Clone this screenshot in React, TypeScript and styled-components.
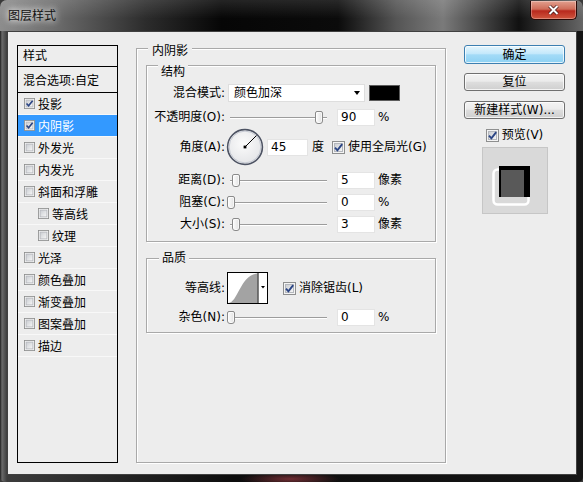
import React from "react";
import styled, { createGlobalStyle } from "styled-components";

const GlobalStyle = createGlobalStyle`
  *, *::before, *::after { box-sizing: border-box; }
  html, body { margin: 0; padding: 0; background: #3a3a3a; }
  body {
    font-family: "DejaVu Sans", "Noto Sans CJK SC", sans-serif;
    font-size: 12px;
    color: #000;
  }
`;

const effects = [
  { name: "投影", checked: true },
  { name: "内阴影", checked: true, selected: true },
  { name: "外发光" },
  { name: "内发光" },
  { name: "斜面和浮雕" },
  { name: "等高线", sub: true },
  { name: "纹理", sub: true },
  { name: "光泽" },
  { name: "颜色叠加" },
  { name: "渐变叠加" },
  { name: "图案叠加" },
  { name: "描边" },
];

const structSliders = [
  { label: "距离(D):", value: "5", unit: "像素", thumb: 2, mt: 5 },
  { label: "阻塞(C):", value: "0", unit: "%", thumb: -3, mt: 4 },
  { label: "大小(S):", value: "3", unit: "像素", thumb: 2, mt: 4 },
];

function CheckBox({ checked, size = 13 }: { checked?: boolean; size?: number }) {
  return (
    <CheckSvg width={size} height={size} viewBox="0 0 13 13">
      <defs>
        <linearGradient id="cbFill" x1="0" y1="0" x2="1" y2="1">
          <stop offset="0" stopColor="#c9ccd1" />
          <stop offset="1" stopColor="#f8f8f8" />
        </linearGradient>
      </defs>
      <rect x="0.5" y="0.5" width="12" height="12" fill="#f4f4f4" stroke="#8e8f8f" />
      <rect x="2.5" y="2.5" width="8" height="8" fill="url(#cbFill)" stroke="#b4b7bd" />
      {checked && (
        <path d="M3 6.6 L5.4 9.3 L10.2 3.2" fill="none" stroke="#2b4585" strokeWidth="1.9" />
      )}
    </CheckSvg>
  );
}

function SliderRow(props: { label: string; value: string; unit: string; thumb: number; mt: number }) {
  return (
    <Row $h={18} $mt={props.mt}>
      <Label>{props.label}</Label>
      <Slider>
        <Thumb style={{ left: props.thumb }} />
      </Slider>
      <NumBox $w={38} $ml={10}>{props.value}</NumBox>
      <Unit $ml={3}>{props.unit}</Unit>
    </Row>
  );
}

export default function App() {
  return (
    <>
      <GlobalStyle />
      <Window>
        <TitleBar>
          <Title>图层样式</Title>
          <CloseButton aria-label="关闭">
            <svg width="11" height="10" viewBox="0 0 11 10">
              <path d="M1.5 1 L9.5 9 M9.5 1 L1.5 9" stroke="#3a1010" strokeWidth="3.4" />
              <path d="M1.5 1 L9.5 9 M9.5 1 L1.5 9" stroke="#fff" strokeWidth="2" />
            </svg>
          </CloseButton>
        </TitleBar>
        <Client>
          <ListPanel>
            <ListHeader>样式</ListHeader>
            <BlendRow>混合选项:自定</BlendRow>
            {effects.map((e) => (
              <EffectItem key={e.name} $indent={e.sub ? 20 : 6} $selected={!!e.selected}>
                <CheckBox checked={e.checked} size={11} />
                <span>{e.name}</span>
              </EffectItem>
            ))}
          </ListPanel>

          <OuterGroup>
            <Caption $top={-5} $left={2} $pad={4}>内阴影</Caption>

            <InnerGroup $h={177} $mt={7}>
              <Caption $top={-1} $left={11} $pad={3}>结构</Caption>
              <Row $h={18} $mt={5}>
                <Label>混合模式:</Label>
                <Select>
                  <span>颜色加深</span>
                  <Caret />
                </Select>
                <Swatch />
              </Row>
              <SliderRow label="不透明度(O):" value="90" unit="%" thumb={85} mt={6} />
              <Row $h={38} $mt={2}>
                <Label>角度(A):</Label>
                <DialSvg width="38" height="38" viewBox="0 0 38 38">
                  <defs>
                    <radialGradient id="dialFill" cx="0.45" cy="0.4" r="0.65">
                      <stop offset="0" stopColor="#fbfbfb" />
                      <stop offset="1" stopColor="#e2e3e6" />
                    </radialGradient>
                  </defs>
                  <circle cx="19" cy="19" r="17.4" fill="url(#dialFill)" stroke="#4d5363" strokeWidth="1.6" />
                  <circle cx="19" cy="19" r="15.9" fill="none" stroke="#c5c9d2" strokeWidth="1" />
                  <line x1="19" y1="19" x2="30.5" y2="7.5" stroke="#000" strokeWidth="1" />
                  <rect x="17.6" y="17.6" width="2.8" height="2.8" fill="#000" />
                </DialSvg>
                <NumBox $w={41} $ml={3}>45</NumBox>
                <Unit $ml={4}>度</Unit>
                <CheckLabel $ml={8}>
                  <CheckBox checked />
                  <span>使用全局光(G)</span>
                </CheckLabel>
              </Row>
              {structSliders.map((s) => (
                <SliderRow key={s.label} {...s} />
              ))}
            </InnerGroup>

            <InnerGroup $h={75} $mt={16}>
              <Caption $top={-8} $left={12} $pad={3}>品质</Caption>
              <Row $h={32} $mt={7}>
                <Label>等高线:</Label>
                <ContourSvg width="41" height="32" viewBox="0 0 41 32">
                  <rect x="0.5" y="0.5" width="40" height="31" fill="#fff" stroke="#000" />
                  <path d="M1 31 C 11 31, 13 3, 30.5 1.5 L30.5 31 Z" fill="#a3a3a3" />
                  <line x1="31" y1="0" x2="31" y2="32" stroke="#000" />
                  <path d="M34 14 L38 14 L36 16.5 Z" fill="#000" />
                </ContourSvg>
                <CheckLabel $ml={15}>
                  <CheckBox checked />
                  <span>消除锯齿(L)</span>
                </CheckLabel>
              </Row>
              <SliderRow label="杂色(N):" value="0" unit="%" thumb={-3} mt={4} />
            </InnerGroup>
          </OuterGroup>

          <Side>
            <Button $primary $h={19} $mt={0}>确定</Button>
            <Button $h={18} $mt={9}>复位</Button>
            <Button $h={18} $mt={10}>新建样式(W)...</Button>
            <PreviewCheck>
              <CheckBox checked />
              <span>预览(V)</span>
            </PreviewCheck>
            <PreviewBox>
              <svg width="64" height="65" viewBox="0 0 64 65">
                <rect x="10.5" y="21.5" width="35" height="35" rx="4" fill="none" stroke="#fff" strokeWidth="2.5" />
                <rect x="16" y="18" width="31" height="31" fill="#000" />
                <rect x="18" y="22" width="23" height="27" fill="#595959" />
              </svg>
            </PreviewBox>
          </Side>
        </Client>
      </Window>
    </>
  );
}

const Window = styled.div`
  width: 583px;
  height: 482px;
  display: flex;
  flex-direction: column;
  border-radius: 7px 7px 5px 5px;
  overflow: hidden;
  background:
    radial-gradient(ellipse 50px 7px at 290px 479px, rgba(190, 70, 80, 0.55), transparent),
    linear-gradient(90deg, #1d1d1d 0px, #6a6a6a 2px, #3c3c3c 7px, #0d0d0d 40%, #151515 100%);
`;

const TitleBar = styled.div`
  height: 31px;
  flex-shrink: 0;
  display: flex;
  justify-content: space-between;
  align-items: flex-start;
  padding-left: 8px;
  background:
    linear-gradient(180deg, rgba(255, 255, 255, 0.12), rgba(255, 255, 255, 0) 60%),
    linear-gradient(90deg, #8d8d8d 0%, #6a6a6a 10%, #2c2c2c 25%, #060606 38%, #0b0b0b 58%,
      #555 68%, #7a7a7a 76%, #2a2a2a 86%, #111 89%, #666 100%);
`;

const Title = styled.div`
  margin-top: 9px;
  line-height: 14px;
  color: #111;
  text-shadow: 0 0 6px #fff, 0 0 10px rgba(255, 255, 255, 0.8);
`;

const CloseButton = styled.div`
  width: 47px;
  height: 19px;
  margin: 1px 6px 0 0;
  border: 1px solid #2a0906;
  border-top: none;
  border-radius: 0 0 5px 5px;
  background: linear-gradient(180deg, #e2a08f 0%, #cf6d59 45%, #b8291d 55%, #d0563e 100%);
  box-shadow: inset 0 0 0 1px rgba(255, 255, 255, 0.3);
  display: flex;
  align-items: center;
  justify-content: center;
`;

const Client = styled.div`
  flex: 1;
  margin: 0 6px 7px 7px;
  border: 1px solid #404040;
  background: #ededed;
  display: flex;
  align-items: flex-start;
  padding: 13px 0 0 9px;
`;

const ListPanel = styled.div`
  width: 101px;
  height: 418px;
  flex-shrink: 0;
  border: 1px solid #000;
  display: flex;
  flex-direction: column;
`;

const ListHeader = styled.div`
  height: 21px;
  line-height: 20px;
  padding-left: 5px;
  border-bottom: 1px solid #000;
`;

const BlendRow = styled.div`
  height: 26px;
  padding: 4px 0 0 5px;
  line-height: 20px;
  border-bottom: 1px solid #000;
  white-space: nowrap;
`;

const EffectItem = styled.div<{ $indent: number; $selected: boolean }>`
  height: 22px;
  display: flex;
  align-items: center;
  gap: 3px;
  padding-left: ${(p) => p.$indent}px;
  border-bottom: 1px solid #f8f8f8;
  background: ${(p) => (p.$selected ? "#3399ff" : "transparent")};
  color: ${(p) => (p.$selected ? "#fff" : "#000")};
  white-space: nowrap;
`;

const CheckSvg = styled.svg`
  display: block;
  flex-shrink: 0;
`;

const OuterGroup = styled.div`
  width: 310px;
  height: 415px;
  margin: 3px 0 0 18px;
  padding: 0 9px;
  flex-shrink: 0;
  border: 1px solid #a9a9a9;
  box-shadow: inset 1px 1px 0 #fff, 1px 1px 0 #fff;
  display: flex;
  flex-direction: column;
`;

const InnerGroup = styled.div<{ $h: number; $mt: number }>`
  height: ${(p) => p.$h}px;
  margin-top: ${(p) => p.$mt}px;
  border: 1px solid #a9a9a9;
  box-shadow: inset 1px 1px 0 #fff, 1px 1px 0 #fff;
  display: flex;
  flex-direction: column;
`;

const Caption = styled.div<{ $top: number; $left: number; $pad: number }>`
  align-self: flex-start;
  margin: ${(p) => p.$top}px 0 0 ${(p) => p.$left}px;
  padding: 0 ${(p) => p.$pad}px;
  line-height: 14px;
  background: #ededed;
`;

const Row = styled.div<{ $h: number; $mt: number }>`
  height: ${(p) => p.$h}px;
  margin-top: ${(p) => p.$mt}px;
  display: flex;
  align-items: center;
  white-space: nowrap;
`;

const Label = styled.div`
  width: 78px;
  flex-shrink: 0;
  text-align: right;
  line-height: 14px;
`;

const Select = styled.div`
  width: 137px;
  height: 18px;
  margin-left: 3px;
  padding: 0 4px 0 5px;
  background: #fff;
  border: 1px solid #dedede;
  display: flex;
  align-items: center;
  justify-content: space-between;
  line-height: 14px;
`;

const Caret = styled.span`
  width: 0;
  height: 0;
  border-left: 3.5px solid transparent;
  border-right: 3.5px solid transparent;
  border-top: 4px solid #000;
`;

const Swatch = styled.div`
  width: 31px;
  height: 16px;
  margin-left: 4px;
  background: #000;
  border: 1px solid #5c5c5c;
`;

const Slider = styled.div`
  position: relative;
  width: 97px;
  height: 13px;
  margin-left: 5px;
  flex-shrink: 0;

  &::before {
    content: "";
    position: absolute;
    left: 0;
    right: 0;
    top: 6px;
    height: 1px;
    background: #9c9c9c;
    box-shadow: 0 1px 0 #fff;
  }
`;

const Thumb = styled.div`
  position: absolute;
  top: 0;
  width: 8px;
  height: 13px;
  border: 1px solid #8a8a8a;
  border-radius: 2px 2px 3px 3px;
  background: linear-gradient(90deg, #fdfdfd, #e2e2e2);
  box-shadow: inset 0 0 0 1px rgba(255, 255, 255, 0.7);
`;

const NumBox = styled.div<{ $w: number; $ml: number }>`
  width: ${(p) => p.$w}px;
  height: 17px;
  margin-left: ${(p) => p.$ml}px;
  padding-left: 3px;
  background: #fff;
  border: 1px solid #e4e4e4;
  line-height: 15px;
  flex-shrink: 0;
`;

const Unit = styled.span<{ $ml: number }>`
  margin-left: ${(p) => p.$ml}px;
  line-height: 14px;
`;

const DialSvg = styled.svg`
  display: block;
  flex-shrink: 0;
  margin-left: 1px;
`;

const ContourSvg = styled.svg`
  display: block;
  flex-shrink: 0;
  margin-left: 2px;
`;

const CheckLabel = styled.label<{ $ml: number }>`
  display: flex;
  align-items: center;
  gap: 3px;
  margin-left: ${(p) => p.$ml}px;
  line-height: 14px;
`;

const Side = styled.div`
  width: 101px;
  margin-left: 18px;
  flex-shrink: 0;
  display: flex;
  flex-direction: column;
  align-items: center;
`;

const Button = styled.div<{ $primary?: boolean; $h: number; $mt: number }>`
  width: 101px;
  height: ${(p) => p.$h}px;
  margin-top: ${(p) => p.$mt}px;
  border: 1px solid ${(p) => (p.$primary ? "#3c7fb1" : "#707070")};
  border-radius: 3px;
  background: ${(p) =>
    p.$primary
      ? "linear-gradient(180deg, #e6f6fd 0%, #c3e8fb 45%, #a3dbf7 52%, #8dd1f3 100%)"
      : "linear-gradient(180deg, #f3f3f3 0%, #ebebeb 45%, #dddddd 52%, #cfcfcf 100%)"};
  box-shadow: inset 0 0 0 1px rgba(255, 255, 255, 0.75);
  display: flex;
  align-items: center;
  justify-content: center;
  line-height: 14px;
  white-space: nowrap;
`;

const PreviewCheck = styled.label`
  height: 14px;
  margin-top: 9px;
  display: flex;
  align-items: center;
  gap: 3px;
  line-height: 14px;
`;

const PreviewBox = styled.div`
  width: 66px;
  height: 67px;
  margin-top: 5px;
  background: #d9d9d9;
  border: 1px solid #c6c6c6;
  display: flex;
  align-items: center;
  justify-content: center;
`;
